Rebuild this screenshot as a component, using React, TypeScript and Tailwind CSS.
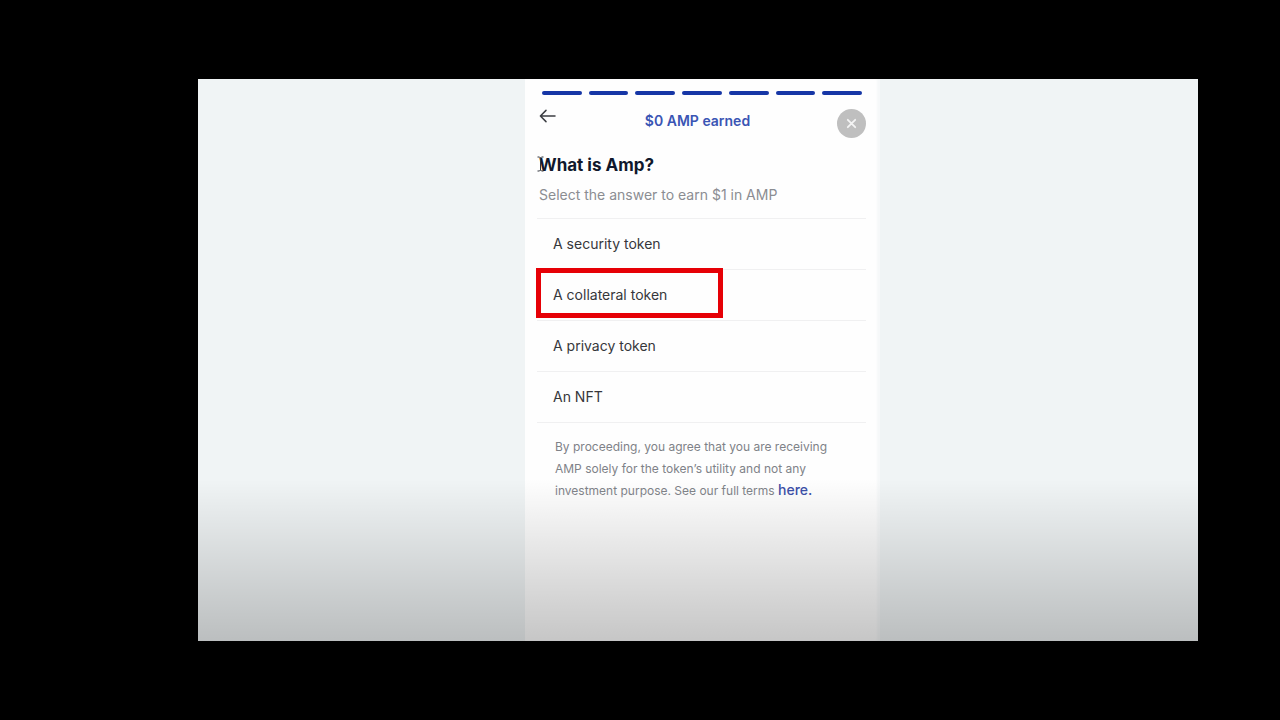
const STEPS = [1, 2, 3, 4, 5, 6, 7];

const ANSWERS = [
  { label: 'A security token', highlighted: false },
  { label: 'A collateral token', highlighted: true },
  { label: 'A privacy token', highlighted: false },
  { label: 'An NFT', highlighted: false },
];

function Progress() {
  return (
    <div className="flex gap-[7px] pr-[18px] pl-[17px]">
      {STEPS.map((step) => (
        <span key={step} className="h-1 flex-1 rounded-full bg-[#1636a6]" />
      ))}
    </div>
  );
}

function Header() {
  return (
    <header className="mt-3 flex items-start justify-between pr-[14px] pl-3">
      <button type="button" aria-label="Back" className="flex h-[29px] w-[29px] items-start pt-[2px] pl-[2px]">
        <svg
          width="18"
          height="14"
          viewBox="0 0 18 14"
          fill="none"
          stroke="#3c3e43"
          strokeWidth="1.5"
          strokeLinecap="round"
          strokeLinejoin="round"
        >
          <path d="M16 7H1.4M7 1.4L1.4 7L7 12.6" />
        </svg>
      </button>
      <p className="pt-1 pr-2 text-sm leading-5 font-semibold text-[#3a55b4]">$0 AMP earned</p>
      <button
        type="button"
        aria-label="Close"
        className="mt-[2px] flex h-[29px] w-[29px] items-center justify-center rounded-full bg-[#bfbfbf]"
      >
        <svg width="11" height="11" viewBox="0 0 11 11" fill="none" stroke="#f4f4f4" strokeWidth="1.8" strokeLinecap="round">
          <path d="M1.8 1.8L9.2 9.2M9.2 1.8L1.8 9.2" />
        </svg>
      </button>
    </header>
  );
}

function TextCursor() {
  return (
    <svg
      className="absolute top-[3px] left-3"
      width="7"
      height="16"
      viewBox="0 0 7 16"
      fill="none"
      stroke="#30343c"
      strokeWidth="1"
      aria-hidden="true"
    >
      <path d="M0.5 1H2.5L3.5 2L4.5 1H6.5M3.5 2V14M0.5 15H2.5L3.5 14L4.5 15H6.5" />
    </svg>
  );
}

export default function App() {
  return (
    <div className="flex min-h-screen bg-black pt-[79px] pr-[82px] pb-[79px] pl-[198px] font-['Inter','Liberation_Sans',sans-serif]">
      <main className="relative grid flex-1 grid-cols-[327fr_355px_318fr] bg-[#f0f4f5]">
        <section className="col-start-2 bg-[#fefefe] pt-3 shadow-[inset_-3px_0_2px_#f6f8f9]">
          <Progress />
          <Header />

          <div className="relative mt-[15px] pl-[14px]">
            <h1 className="text-[17px] leading-6 font-bold text-[#10182c]">What is Amp?</h1>
            <TextCursor />
            <p className="mt-2 text-sm leading-5 text-[#8b8d92]">Select the answer to earn $1 in AMP</p>
          </div>

          <ul className="mt-[13px] mr-[14px] ml-3 border-t border-[#f0f0f1]">
            {ANSWERS.map(({ label, highlighted }) => (
              <li key={label} className="relative border-b border-[#f0f0f1]">
                <button type="button" className="flex h-[50px] w-full items-center px-4 text-left text-sm text-[#36373b]">
                  {label}
                </button>
                {highlighted && (
                  <span className="pointer-events-none absolute -top-[2px] -left-px h-[50px] w-[187px] border-[5px] border-[#e60006]" />
                )}
              </li>
            ))}
          </ul>

          <p className="relative z-10 mt-[13px] mr-8 ml-[30px] text-xs leading-[22px] text-[#7f8288]">
            By proceeding, you agree that you are receiving AMP solely for the token’s utility and not any investment
            purpose. See our full terms{' '}
            <a href="#terms" className="inline-block text-sm leading-4 font-medium text-[#3c4fa6]">
              here.
            </a>
          </p>
        </section>
        <div className="pointer-events-none absolute inset-x-0 bottom-0 h-[162px] bg-linear-to-b from-black/0 to-black/22" />
      </main>
    </div>
  );
}
